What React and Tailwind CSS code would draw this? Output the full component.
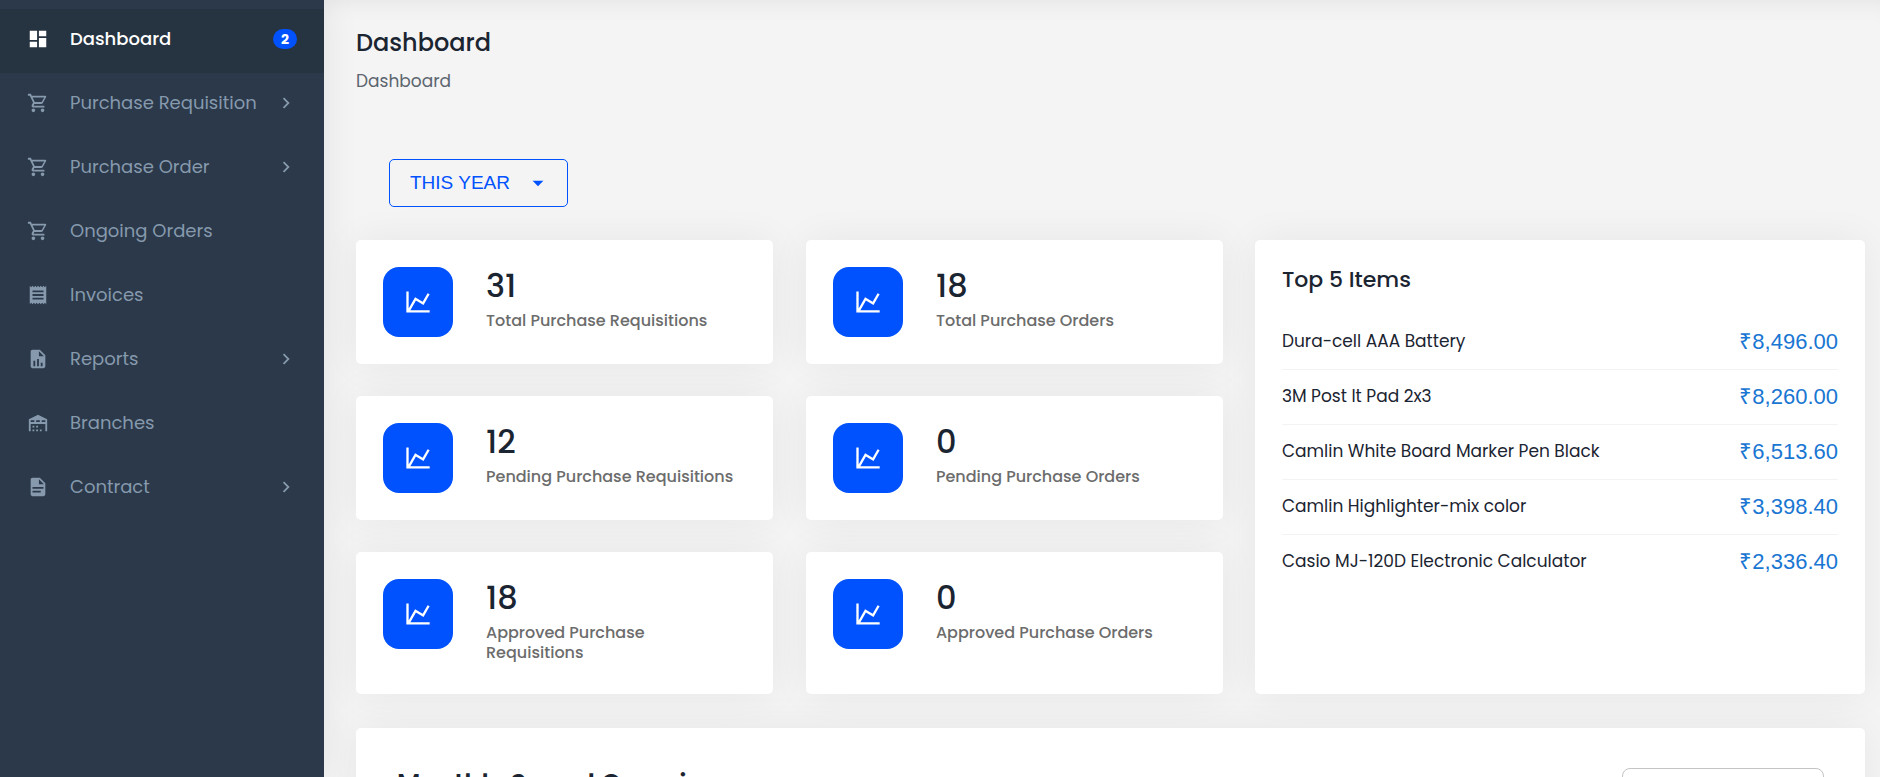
import React from 'react';

const icons = {
  dashboard: 'M13,3V9H21V3M13,21H21V11H13M3,21H11V15H3M3,13H11V3H3V13Z',
  cart: 'M17,18A2,2 0 0,1 19,20A2,2 0 0,1 17,22C15.89,22 15,21.1 15,20C15,18.89 15.89,18 17,18M1,2H4.27L5.21,4H20A1,1 0 0,1 21,5C21,5.17 20.95,5.34 20.88,5.5L17.3,11.97C16.96,12.58 16.3,13 15.55,13H8.1L7.2,14.63L7.17,14.75A0.25,0.25 0 0,0 7.42,15H19V17H7C5.89,17 5,16.1 5,15C5,14.65 5.09,14.32 5.24,14.04L6.6,11.59L3,4H1V2M7,18A2,2 0 0,1 9,20A2,2 0 0,1 7,22C5.89,22 5,21.1 5,20C5,18.89 5.89,18 7,18M16,11L18.78,6H6.14L8.5,11H16Z',
  receipt: 'M3,22L4.5,20.5L6,22L7.5,20.5L9,22L10.5,20.5L12,22L13.5,20.5L15,22L16.5,20.5L18,22L19.5,20.5L21,22V2L19.5,3.5L18,2L16.5,3.5L15,2L13.5,3.5L12,2L10.5,3.5L9,2L7.5,3.5L6,2L4.5,3.5L3,2M18,9H6V7H18M18,13H6V11H18M18,17H6V15H18V17Z',
  fileChart: 'M13,9H18.5L13,3.5V9M6,2H14L20,8V20A2,2 0 0,1 18,22H6C4.89,22 4,21.1 4,20V4C4,2.89 4.89,2 6,2M7,20H9V14H7V20M11,20H13V12H11V20M15,20H17V16H15V20Z',
  warehouse: 'M6 19H8V21H6V19M12 3L2 8V21H4V13H20V21H22V8L12 3M8 11H4V9H8V11M14 11H10V9H14V11M20 11H16V9H20V11M6 15H8V17H6V15M10 15H12V17H10V15M10 19H12V21H10V19M14 19H16V21H14V19Z',
  fileDocument: 'M13,9H18.5L13,3.5V9M6,2H14L20,8V20A2,2 0 0,1 18,22H6C4.89,22 4,21.1 4,20V4C4,2.89 4.89,2 6,2M15,18V16H6V18H15M18,14V12H6V14H18Z',
  chevronRight: 'M8.59,16.58L13.17,12L8.59,7.41L10,6L16,12L10,18L8.59,16.58Z',
  menuDown: 'M7,10L12,15L17,10H7Z',
  chartLine: 'M16,11.78L20.24,4.45L21.97,5.45L16.74,14.5L10.23,10.75L5.46,19H22V21H2V3H4V17.54L9.5,8L16,11.78Z',
};

const menu = [
  { label: 'Dashboard', icon: 'dashboard', active: true, badge: 2 },
  { label: 'Purchase Requisition', icon: 'cart', expandable: true },
  { label: 'Purchase Order', icon: 'cart', expandable: true },
  { label: 'Ongoing Orders', icon: 'cart' },
  { label: 'Invoices', icon: 'receipt' },
  { label: 'Reports', icon: 'fileChart', expandable: true },
  { label: 'Branches', icon: 'warehouse' },
  { label: 'Contract', icon: 'fileDocument', expandable: true },
];

const stats = [
  { value: 31, label: 'Total Purchase Requisitions' },
  { value: 18, label: 'Total Purchase Orders' },
  { value: 12, label: 'Pending Purchase Requisitions' },
  { value: 0, label: 'Pending Purchase Orders' },
  { value: 18, label: 'Approved Purchase Requisitions' },
  { value: 0, label: 'Approved Purchase Orders' },
];

const topItems = [
  { name: 'Dura-cell AAA Battery', amount: '₹8,496.00' },
  { name: '3M Post It Pad 2x3', amount: '₹8,260.00' },
  { name: 'Camlin White Board Marker Pen Black', amount: '₹6,513.60' },
  { name: 'Camlin Highlighter-mix color', amount: '₹3,398.40' },
  { name: 'Casio MJ-120D Electronic Calculator', amount: '₹2,336.40' },
];

const Icon = ({ name, className }) => (
  <svg viewBox="0 0 24 24" fill="currentColor" aria-hidden="true" className={className}>
    <path d={icons[name]} />
  </svg>
);

const Sidebar = () => (
  <aside className="w-[324px] shrink-0 bg-[#2b394a] pt-[9px] shadow-[0_0_35px_rgba(0,0,0,0.08)]">
    <nav>
      <ul>
        {menu.map((item) => (
          <li key={item.label}>
            <a
              href="#"
              className={`flex h-16 items-center px-[27px] pb-1 text-lg ${
                item.active ? 'bg-[#263340] text-white' : 'text-[#8699ad]'
              }`}
            >
              <Icon name={item.icon} className="size-[22px]" />
              <span className={item.active ? 'ml-[21px] flex-1 font-medium' : 'ml-[21px] flex-1'}>
                {item.label}
              </span>
              {item.badge && (
                <span className="flex h-5 w-6 items-center justify-center rounded-full bg-[#0052ff] text-sm font-bold">
                  {item.badge}
                </span>
              )}
              {item.expandable && <Icon name="chevronRight" className="size-[22px]" />}
            </a>
          </li>
        ))}
      </ul>
    </nav>
  </aside>
);

const StatCard = ({ value, label }) => (
  <div className="flex gap-[33px] rounded-[5px] bg-white p-[27px] shadow-[0_0_40px_rgba(0,0,0,0.06)]">
    <div className="flex size-[70px] shrink-0 items-center justify-center rounded-2xl bg-[#0052ff] text-white">
      <Icon name="chartLine" className="size-7" />
    </div>
    <div className="pt-px pr-1 pb-1">
      <div className="mb-[7px] text-[32px] leading-9 font-medium text-[#1b2431]">{value}</div>
      <div className="text-base leading-5 font-medium text-[#6c6c6c]">{label}</div>
    </div>
  </div>
);

const TopItems = () => (
  <section className="col-span-5 rounded-[5px] bg-white p-[27px] shadow-[0_0_40px_rgba(0,0,0,0.06)]">
    <h2 className="mb-[21px] text-[22px] leading-[26px] font-medium text-[#1b2431]">Top 5 Items</h2>
    <table className="w-full">
      <tbody>
        {topItems.map((item) => (
          <tr key={item.name} className="h-[55px] border-b border-[#f3f3f3] last:border-0">
            <td className="text-[17px] text-[#1b2431]">{item.name}</td>
            <td className="text-right font-['Liberation_Sans',Arial,sans-serif] text-[22px] text-[#1976d2]">
              {item.amount}
            </td>
          </tr>
        ))}
      </tbody>
    </table>
  </section>
);

const App = () => {
  return (
    <div className="flex h-screen overflow-hidden bg-[#f4f4f4] font-['Poppins','Inter',sans-serif]">
      <Sidebar />

      <main className="min-w-0 flex-1 pt-[25px] pr-[15px] pl-8 shadow-[inset_0_20px_24px_-20px_rgba(0,0,0,0.08)]">
        <h1 className="text-2xl leading-9 font-medium text-[#1b2431]">Dashboard</h1>
        <p className="mt-2 text-[17px] leading-6 text-[#5c6570]">Dashboard</p>

        <button className="mt-[66px] ml-[33px] flex h-12 items-center rounded-[5px] border border-[#0052ff] pr-4 pl-5 font-['Liberation_Sans',Arial,sans-serif] text-[19px] text-[#0052ff]">
          THIS YEAR
          <Icon name="menuDown" className="ml-[15px] size-[26px]" />
        </button>

        {/* Summary */}
        <div className="mt-[33px] grid grid-cols-12 gap-8">
          <div className="col-span-7 grid grid-cols-2 gap-x-[33px] gap-y-8">
            {stats.map((stat) => (
              <StatCard key={stat.label} value={stat.value} label={stat.label} />
            ))}
          </div>
          <TopItems />
        </div>

        {/* Monthly spend */}
        <section className="mt-[34px] flex items-start justify-between rounded-[5px] bg-white px-[41px] py-10 shadow-[0_0_40px_rgba(0,0,0,0.06)]">
          <h2 className="text-[26px] leading-8 font-semibold text-[#1b2431]">Monthly Spend Overview</h2>
          <select
            aria-label="Period"
            className="h-12 w-[202px] appearance-none rounded-lg border border-[#c4c4c4] px-4"
          >
            <option></option>
          </select>
        </section>
      </main>
    </div>
  );
};

export default App;
